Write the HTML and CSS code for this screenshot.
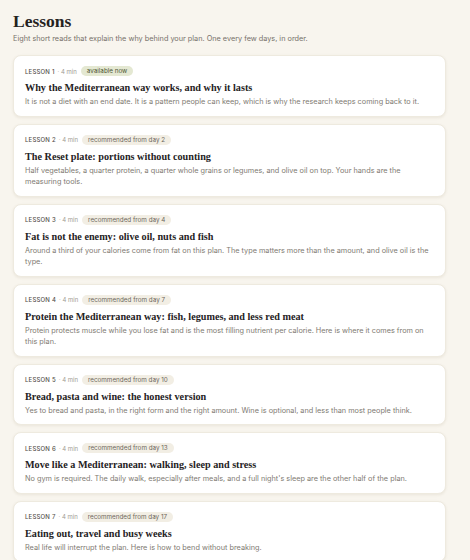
FILE: index.html
```html
<!DOCTYPE html>
<html>
<head>
<meta charset="utf-8">
<link rel="stylesheet" href="styles.css">
</head>
<body>
<main class="page">
  <h1 class="title">Lessons</h1>
  <p class="subtitle">Eight short reads that explain the why behind your plan. One every few days, in order.</p>
  <div class="list">
    <article class="card">
      <div class="meta"><span class="num">LESSON 1</span><span class="dur">· 4 min</span><span class="pill pill-now">available now</span></div>
      <h2 class="card-title">Why the Mediterranean way works, and why it lasts</h2>
      <p class="desc">It is not a diet with an end date. It is a pattern people can keep, which is why the research keeps coming back to it.</p>
    </article>
    <article class="card">
      <div class="meta"><span class="num">LESSON 2</span><span class="dur">· 4 min</span><span class="pill">recommended from day 2</span></div>
      <h2 class="card-title">The Reset plate: portions without counting</h2>
      <p class="desc">Half vegetables, a quarter protein, a quarter whole grains or legumes, and olive oil on top. Your hands are the measuring tools.</p>
    </article>
    <article class="card">
      <div class="meta"><span class="num">LESSON 3</span><span class="dur">· 4 min</span><span class="pill">recommended from day 4</span></div>
      <h2 class="card-title">Fat is not the enemy: olive oil, nuts and fish</h2>
      <p class="desc">Around a third of your calories come from fat on this plan. The type matters more than the amount, and olive oil is the type.</p>
    </article>
    <article class="card">
      <div class="meta"><span class="num">LESSON 4</span><span class="dur">· 4 min</span><span class="pill">recommended from day 7</span></div>
      <h2 class="card-title">Protein the Mediterranean way: fish, legumes, and less red meat</h2>
      <p class="desc">Protein protects muscle while you lose fat and is the most filling nutrient per calorie. Here is where it comes from on this plan.</p>
    </article>
    <article class="card">
      <div class="meta"><span class="num">LESSON 5</span><span class="dur">· 4 min</span><span class="pill">recommended from day 10</span></div>
      <h2 class="card-title">Bread, pasta and wine: the honest version</h2>
      <p class="desc">Yes to bread and pasta, in the right form and the right amount. Wine is optional, and less than most people think.</p>
    </article>
    <article class="card">
      <div class="meta"><span class="num">LESSON 6</span><span class="dur">· 4 min</span><span class="pill">recommended from day 13</span></div>
      <h2 class="card-title">Move like a Mediterranean: walking, sleep and stress</h2>
      <p class="desc">No gym is required. The daily walk, especially after meals, and a full night's sleep are the other half of the plan.</p>
    </article>
    <article class="card">
      <div class="meta"><span class="num">LESSON 7</span><span class="dur">· 4 min</span><span class="pill">recommended from day 17</span></div>
      <h2 class="card-title">Eating out, travel and busy weeks</h2>
      <p class="desc">Real life will interrupt the plan. Here is how to bend without breaking.</p>
    </article>
  </div>
</main>
</body>
</html>
```

FILE: styles.css
```css
html, body {
  margin: 0;
  padding: 0;
  background: #f8f5ee;
}

body {
  font-family: Inter, "Noto Sans", sans-serif;
  color: #2a2723;
}

.page {
  width: 433px;
  margin-left: 13px;
  padding-top: 11px;
}

.title {
  margin: 0;
  font-family: "Liberation Serif", serif;
  font-weight: 700;
  font-size: 17.5px;
  line-height: 20px;
  color: #25221e;
}

.subtitle {
  margin: 3px 0 0;
  font-size: 7.3px;
  line-height: 10px;
  color: #77716a;
}

.list {
  display: flex;
  flex-direction: column;
  gap: 7px;
  margin-top: 11px;
}

.card {
  background: #ffffff;
  border: 1px solid #eeeadf;
  border-radius: 8px;
  box-shadow: 0 1px 3px rgba(120, 100, 60, 0.10);
  padding: 10px 11px 8px;
}

.meta {
  display: flex;
  align-items: center;
  height: 10px;
  font-size: 6px;
}

.num {
  color: #55514b;
  letter-spacing: 0.2px;
  font-weight: 500;
}

.dur {
  color: #a29c93;
  margin-left: 3px;
}

.pill {
  margin-left: 4px;
  padding: 0 6px;
  height: 10px;
  line-height: 10px;
  border-radius: 5px;
  font-size: 6.3px;
  background: #f2eee4;
  color: #6d665c;
}

.pill-now {
  background: #e4e8d2;
  color: #4d5633;
}

.card-title {
  margin: 5px 0 0;
  font-family: "Liberation Serif", serif;
  font-weight: 700;
  font-size: 10.2px;
  line-height: 13px;
  color: #25221e;
}

.desc {
  margin: 2px 0 0;
  font-size: 7.3px;
  line-height: 11.5px;
  color: #807a72;
}
```
